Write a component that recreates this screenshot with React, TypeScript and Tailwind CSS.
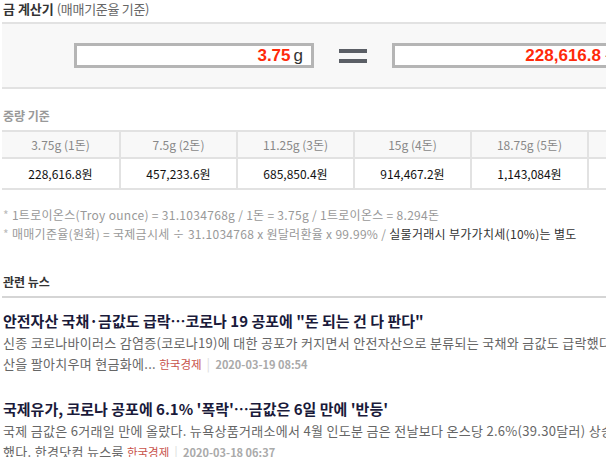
const FONT = "font-['Noto_Sans_CJK_KR','Noto_Sans',sans-serif]";

const weights = [
  { label: "3.75g (1돈)", price: "228,616.8원" },
  { label: "7.5g (2돈)", price: "457,233.6원" },
  { label: "11.25g (3돈)", price: "685,850.4원" },
  { label: "15g (4돈)", price: "914,467.2원" },
  { label: "18.75g (5돈)", price: "1,143,084원" },
  { label: "22.5g (6돈)", price: "1,371,700.8원" },
];

// summary is cut into the two lines the list shows
const news = [
  {
    title: '안전자산 국채·금값도 급락…코로나 19 공포에 "돈 되는 건 다 판다"',
    lines: [
      "신종 코로나바이러스 감염증(코로나19)에 대한 공포가 커지면서 안전자산으로 분류되는 국채와 금값도 급락했다. 투자자들이 자",
      "산을 팔아치우며 현금화에...",
    ],
    source: "한국경제",
    date: "2020-03-19 08:54",
  },
  {
    title: "국제유가, 코로나 공포에 6.1% '폭락'…금값은 6일 만에 '반등'",
    lines: [
      "국제 금값은 6거래일 만에 올랐다. 뉴욕상품거래소에서 4월 인도분 금은 전날보다 온스당 2.6%(39.30달러) 상승한 1,525.8달러에 마감",
      "했다. 한경닷컴 뉴스룸",
    ],
    source: "한국경제",
    date: "2020-03-18 06:37",
  },
];

function CalcInput({ value, unit, red }: { value: string; unit?: string; red?: boolean }) {
  return (
    <div className="flex h-[25px] w-[240px] items-center justify-end border-[3px] border-[#b5b5b5] bg-white px-2">
      <span className={`font-['Liberation_Sans',sans-serif] text-[17px] font-bold ${red ? "text-[#ff2a0a]" : "text-[#333]"}`}>
        {value}
      </span>
      {unit && <span className="ml-[3px] font-['Liberation_Sans',sans-serif] text-[17px] text-[#333]">{unit}</span>}
    </div>
  );
}

export default function App() {
  return (
    <div className={`w-full overflow-hidden bg-white ${FONT}`}>
      <div className="w-[704px] pl-[2px]">
        <h2 className="pl-[1px] text-[13px] leading-[18px] text-[#333]">
          <span className="font-bold">금 계산기</span>{" "}
          <span className="tracking-[-0.3px] text-[#666]">(매매기준율 기준)</span>
        </h2>

        <div className="mt-[4px] flex h-[67px] items-center justify-center gap-[25px] border-y-2 border-[#e2e2e2] bg-[#f8f8f8]">
          <CalcInput value="3.75" unit="g" red />
          <div className="flex w-[28px] flex-col gap-[6px]">
            <div className="h-[4px] bg-[#5b5f66]" />
            <div className="h-[4px] bg-[#5b5f66]" />
          </div>
          <CalcInput value="228,616.8" unit="원" red />
        </div>

        <h3 className="mt-[19px] pl-[1px] text-[12px] font-bold leading-[16px] text-[#999]">중량 기준</h3>

        <div className="mt-[6px] grid grid-cols-6 border-y-2 border-[#e2e2e2]">
          {weights.map((w, i) => (
            <div
              key={w.label}
              className={`flex h-[27px] items-center justify-center border-b-2 border-[#e2e2e2] bg-[#f8f8f8] text-[12px] text-[#888] ${i > 0 ? "border-l-2" : ""}`}
            >
              {w.label}
            </div>
          ))}
          {weights.map((w, i) => (
            <div
              key={w.price}
              className={`flex h-[29px] items-center justify-center border-[#e2e2e2] text-[12px] text-[#111] ${i > 0 ? "border-l-2" : ""}`}
            >
              {w.price}
            </div>
          ))}
        </div>

        <ul className="mt-[15px] pl-[1px] text-[12px] leading-[19px] tracking-[0.3px] text-[#999]">
          <li>
            <span className="text-[#bbb]">*</span> 1트로이온스(Troy ounce) = 31.1034768g / 1돈 = 3.75g / 1트로이온스 = 8.294돈
          </li>
          <li>
            <span className="text-[#bbb]">*</span> 매매기준율(원화) = 국제금시세 ÷ 31.1034768 x 원달러환율 x 99.99% /{" "}
            <span className="text-[#333]">실물거래시 부가가치세(10%)는 별도</span>
          </li>
        </ul>

        <h3 className="mt-[31px] pl-[1px] text-[12px] font-bold leading-[16px] text-[#333]">관련 뉴스</h3>
        <div className="mt-[6px] h-[2px] bg-[#d5d5d5]" />

        <div className="mt-[12px] flex flex-col gap-[23px] pl-[1px]">
          {news.map((n) => (
            <article key={n.date}>
              <h4 className="text-[15px] font-bold leading-[21px] text-[#1a1a3a]">{n.title}</h4>
              <p className="mt-[1px] whitespace-nowrap text-[13px] leading-[21px] tracking-[0.3px] text-[#666]">
                {n.lines[0]}
                <br />
                {n.lines[1]} <span className="text-[11.5px] tracking-normal text-[#c8524a]">{n.source}</span>
                <span className="mx-[5px] text-[#ddd]">|</span>
                <span className="text-[11px] font-bold tracking-normal text-[#aaa]">{n.date}</span>
              </p>
            </article>
          ))}
        </div>
      </div>
    </div>
  );
}
